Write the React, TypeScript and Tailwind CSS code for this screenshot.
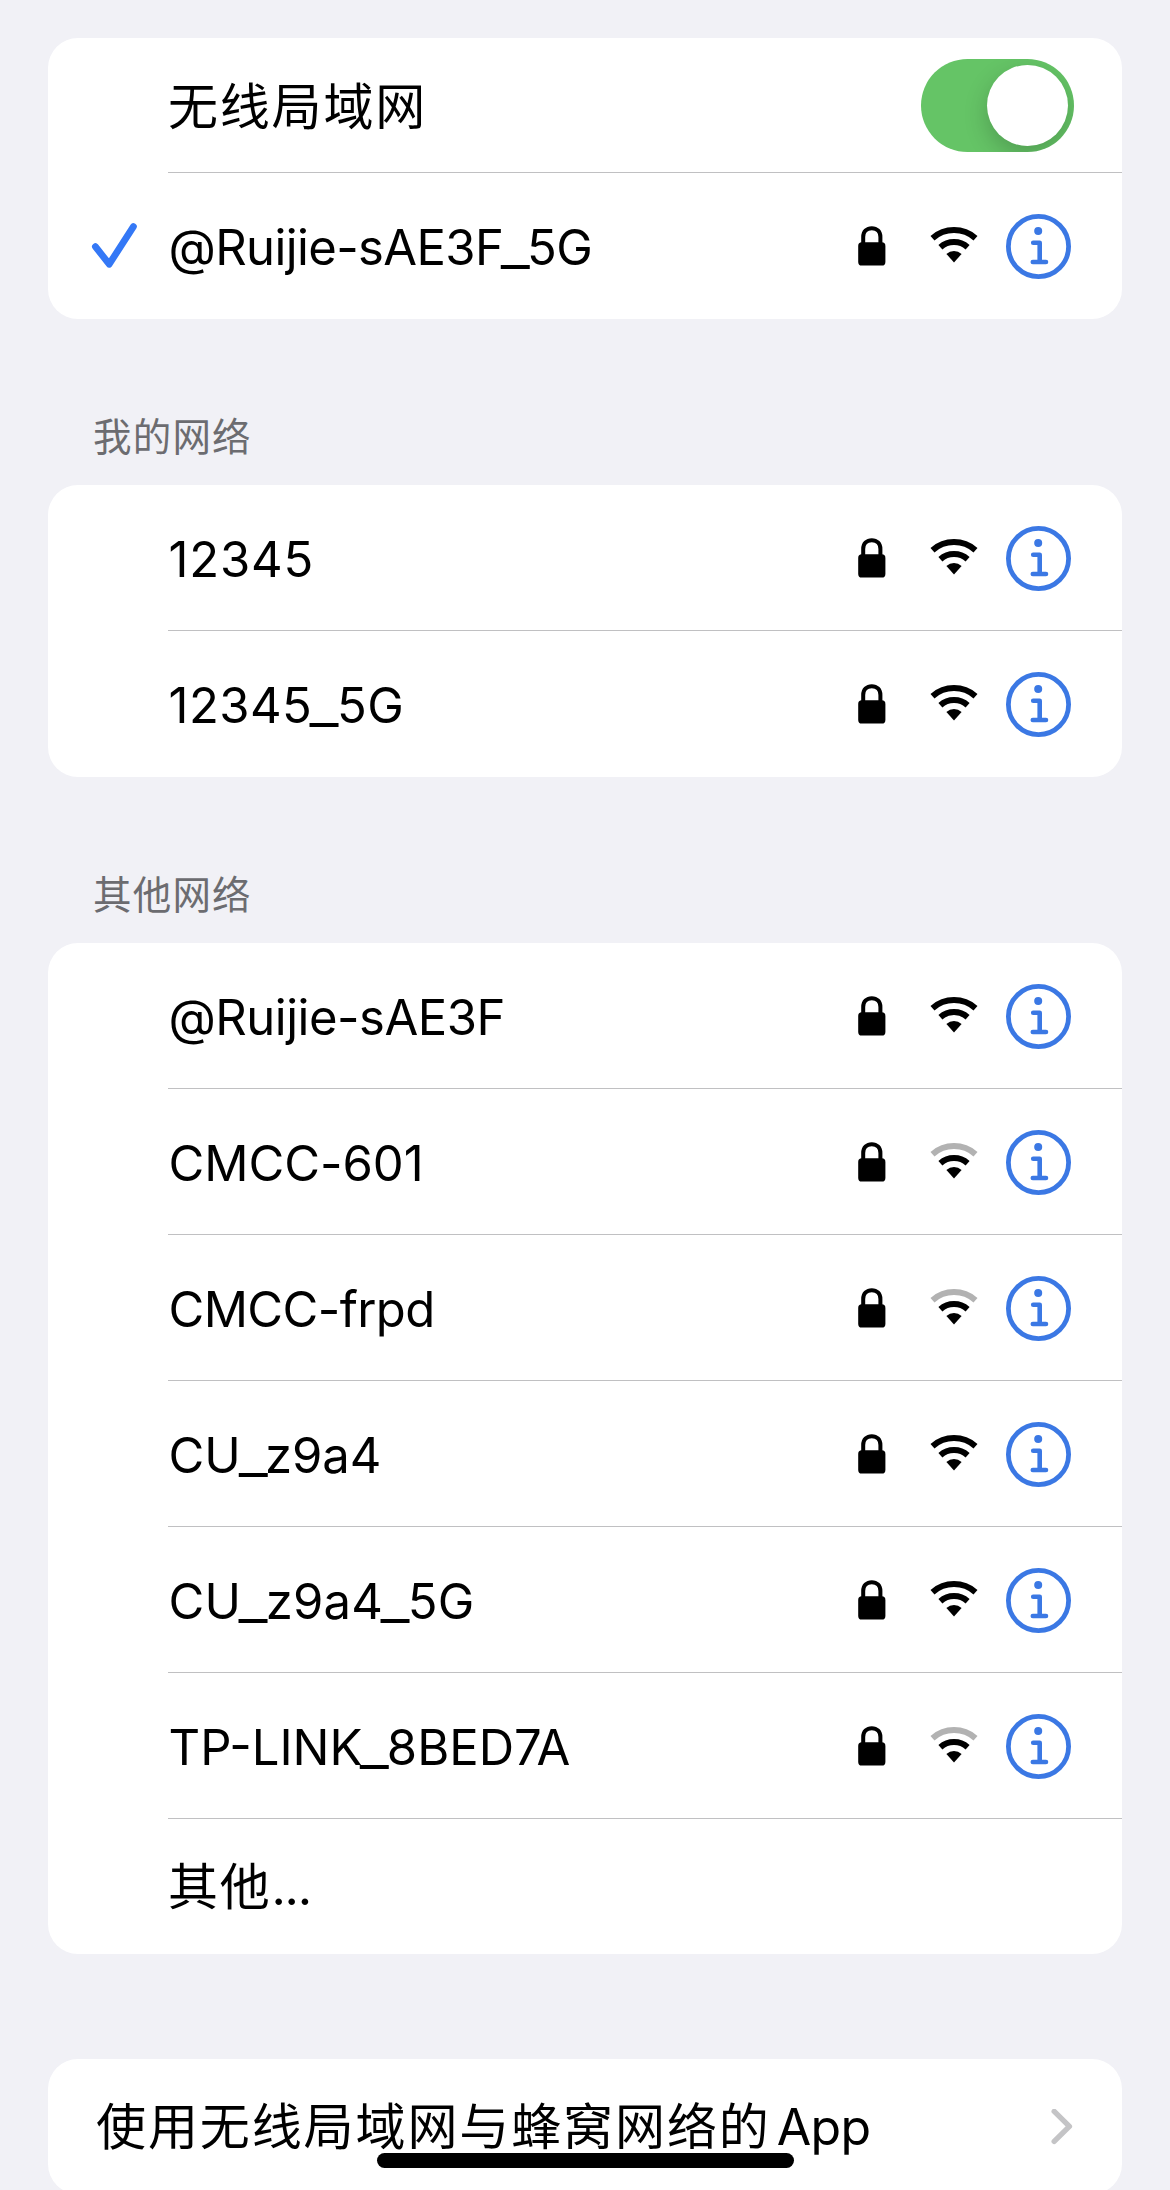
type Network = {
  name: string;
  tracking: string;
  weak?: boolean;
  connected?: boolean;
};

const currentNetwork: Network = {
  name: '@Ruijie-sAE3F_5G',
  tracking: 'tracking-[-0.62px]',
  connected: true,
};

const myNetworks: Network[] = [
  { name: '12345', tracking: 'tracking-[0.8px]' },
  { name: '12345_5G', tracking: 'tracking-[0.45px]' },
];

const otherNetworks: Network[] = [
  { name: '@Ruijie-sAE3F', tracking: 'tracking-[-0.5px]' },
  { name: 'CMCC-601', tracking: 'tracking-[-0.05px]', weak: true },
  { name: 'CMCC-frpd', tracking: 'tracking-[-0.6px]', weak: true },
  { name: 'CU_z9a4', tracking: 'tracking-[-0.05px]' },
  { name: 'CU_z9a4_5G', tracking: 'tracking-[0.2px]' },
  { name: 'TP-LINK_8BED7A', tracking: 'tracking-[0px]', weak: true },
];

function LockIcon() {
  return (
    <svg className="w-7 h-10 shrink-0" viewBox="0 0 28 40" fill="none">
      <path d="M5.2 19V11C5.2 5.5 8.8 2.2 13.8 2.2S22.4 5.5 22.4 11V19" stroke="#000" strokeWidth="4" />
      <rect x="0.2" y="16.3" width="27.2" height="23.2" rx="3.6" fill="#000" />
    </svg>
  );
}

function WifiIcon({ weak }: { weak?: boolean }) {
  return (
    <svg className="w-12 h-9 shrink-0" viewBox="0 0 48 36" fill="none">
      <path d="M2.5 11.2A32.5 32.5 0 0 1 45.5 11.2" stroke={weak ? '#b2b2b2' : '#000'} strokeWidth="6" />
      <path d="M10.4 20.15A20.5 20.5 0 0 1 37.6 20.15" stroke="#000" strokeWidth="6" />
      <path d="M16.4 26.9A11.5 11.5 0 0 1 31.6 26.9L24 35.5Z" fill="#000" />
    </svg>
  );
}

function InfoIcon() {
  return (
    <svg className="w-[65px] h-[65px] shrink-0" viewBox="0 0 65 65" fill="none">
      <circle cx="32.5" cy="32.5" r="30.1" stroke="#3b78e4" strokeWidth="4.8" />
      <circle cx="32.2" cy="17" r="4" fill="#3b78e4" />
      <path
        d="M27.2 28.8H33.7V48M26.8 48H40"
        stroke="#3b78e4"
        strokeWidth="4.6"
        strokeLinecap="round"
        strokeLinejoin="round"
      />
    </svg>
  );
}

function CheckIcon() {
  return (
    <svg className="w-[46px] h-[46px]" viewBox="0 0 46 46" fill="none">
      <path d="M4.4 23.6L18.2 41.2L42.4 3.6" stroke="#3478f6" strokeWidth="6.8" strokeLinecap="round" strokeLinejoin="round" />
    </svg>
  );
}

function Card({ children }: { children: React.ReactNode }) {
  return <div className="bg-white rounded-[30px] overflow-hidden">{children}</div>;
}

function SectionTitle({ children }: { children: React.ReactNode }) {
  return (
    <h2 className="h-[166px] pl-[45px] pt-[92px] text-[38.5px] leading-[52px] tracking-[1.2px] text-[#6c6c70]">
      {children}
    </h2>
  );
}

function NetworkName({ name }: { name: string }) {
  // underscores are drawn wider than the font's own glyph
  return name.split(/(_)/).map((part, index) =>
    part === '_' ? (
      <span key={index} className="inline-block mx-px scale-x-[1.3]">
        _
      </span>
    ) : (
      part
    )
  );
}

function NetworkRow({ network, last }: { network: Network; last?: boolean }) {
  return (
    <div className="flex h-[146px]">
      <div className="w-[120px] shrink-0 flex items-center pl-[43px]">
        {network.connected && <CheckIcon />}
      </div>
      <div className={`flex-1 flex items-center pr-[51px] ${last ? 'pb-px' : 'border-b border-[#c0c0c2]'}`}>
        <div className={`flex-1 pt-[5px] pl-[0.5px] text-[49px] leading-[60px] whitespace-nowrap ${network.tracking}`}>
          <NetworkName name={network.name} />
        </div>
        <LockIcon />
        <div className="ml-11 mr-7 -mt-[2px]">
          <WifiIcon weak={network.weak} />
        </div>
        <div className="pt-[2px]">
          <InfoIcon />
        </div>
      </div>
    </div>
  );
}

export default function App() {
  return (
    <div className="relative w-[1170px] h-[2190px] overflow-hidden bg-[#f1f1f6] px-12 pt-[38px] text-black font-['Inter','Noto_Sans_CJK_SC',sans-serif]">
      <Card>
        <div className="flex h-[135px] pl-[120px]">
          <div className="flex-1 flex items-center justify-between pr-12 border-b border-[#c0c0c2]">
            <span className="pt-[3px] text-[50px] leading-[60px] tracking-[1.8px]">无线局域网</span>
            <div className="w-[153px] h-[93px] rounded-full bg-[#65c466] p-1.5 flex justify-end overflow-hidden">
              <div className="w-[81px] h-[81px] rounded-full bg-white shadow-[0_9px_24px_rgba(0,0,0,0.2)]" />
            </div>
          </div>
        </div>
        <NetworkRow network={currentNetwork} last />
      </Card>

      <SectionTitle>我的网络</SectionTitle>
      <Card>
        {myNetworks.map((network, index) => (
          <NetworkRow key={network.name} network={network} last={index === myNetworks.length - 1} />
        ))}
      </Card>

      <SectionTitle>其他网络</SectionTitle>
      <Card>
        {otherNetworks.map((network) => (
          <NetworkRow key={network.name} network={network} />
        ))}
        <div className="h-[135px] pl-[120px] flex items-center">
          <span className="pt-px text-[50px] leading-[60px] tracking-[1.7px]">
            其他<span className="tracking-[-1.2px]">...</span>
          </span>
        </div>
      </Card>

      <div className="h-[105px]" />
      <Card>
        <div className="h-[135px] pl-12 pr-[49px] flex items-center justify-between">
          <span className="pt-px text-[50px] leading-[60px] tracking-[1.9px]">
            使用无线局域网与蜂窝网络的<span className="ml-[6px] tracking-[-0.6px]">App</span>
          </span>
          <svg className="w-[22px] h-9" viewBox="0 0 22 36" fill="none">
            <path d="M3.2 2.4L18.4 17.4L3.2 32.4" stroke="#c4c4c6" strokeWidth="5.4" strokeLinecap="round" strokeLinejoin="round" />
          </svg>
        </div>
      </Card>

      {/* Home indicator */}
      <div className="absolute left-[377px] top-[2153px] w-[417px] h-[15px] rounded-full bg-black" />
    </div>
  );
}
